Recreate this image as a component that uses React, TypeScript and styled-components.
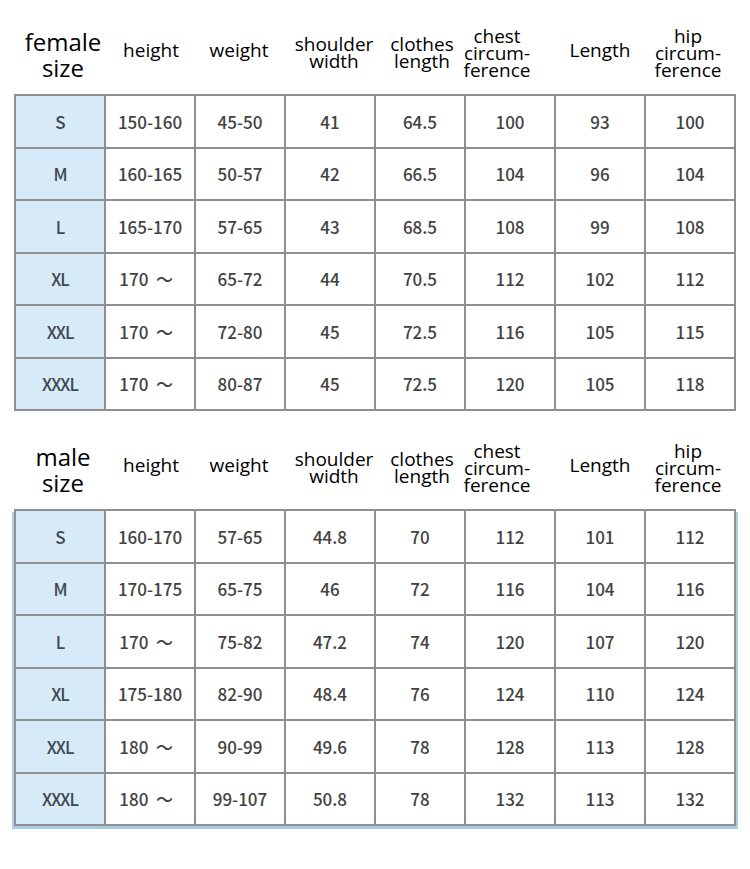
import React from "react";
import styled, { createGlobalStyle } from "styled-components";

const GlobalStyle = createGlobalStyle`
  html, body {
    margin: 0;
    padding: 0;
    background: #ffffff;
  }
`;

const Page = styled.div`
  width: 750px;
  min-height: 869px;
  padding: 16px 0 0 14px;
  box-sizing: border-box;
  display: flex;
  flex-direction: column;
  gap: 20px;
`;

const Section = styled.section`
  display: flex;
  flex-direction: column;
`;

const HeaderRow = styled.div`
  display: grid;
  grid-template-columns: repeat(8, 90px);
  height: 78px;
  align-items: center;
  font-family: "Open Sans", "Noto Sans", sans-serif;
  color: #000;
`;

const Title = styled.div`
  font-size: 24px;
  line-height: 26px;
  text-align: center;
  margin-left: 8px;
`;

const Label = styled.div<{ $nudge: number; $single: boolean }>`
  font-size: 19px;
  line-height: 17px;
  text-align: center;
  margin-left: ${(p) => p.$nudge * 2}px;
  margin-top: ${(p) => (p.$single ? -10 : -4)}px;
  white-space: nowrap;
`;

const Grid = styled.div<{ $edge?: boolean }>`
  display: grid;
  grid-template-columns: repeat(8, 88px);
  grid-auto-rows: 50.5px;
  gap: 2px;
  padding: 2px;
  width: max-content;
  background: #8f8f8f;
  box-shadow: ${(p) => (p.$edge ? "2px 3px 0 #a9cfe6, -2px 3px 0 #a9cfe6" : "none")};
`;

const Cell = styled.div<{ $size?: boolean }>`
  display: flex;
  align-items: center;
  justify-content: center;
  background: ${(p) => (p.$size ? "#d7eaf8" : "#ffffff")};
  color: ${(p) => (p.$size ? "#3e4852" : "#424242")};
  font-family: "Noto Sans CJK SC", "Noto Sans", sans-serif;
  font-size: 17px;
  font-weight: 500;
  letter-spacing: ${(p) => (p.$size ? "-1px" : "0")};
  white-space: pre;
`;

type Row = string[];

const headers: { text: string[]; nudge: number }[] = [
  { text: ["height"], nudge: 2 },
  { text: ["weight"], nudge: 0 },
  { text: ["shoulder", "width"], nudge: 5 },
  { text: ["clothes", "length"], nudge: 3 },
  { text: ["chest", "circum-", "ference"], nudge: -12 },
  { text: ["Length"], nudge: 1 },
  { text: ["hip", "circum-", "ference"], nudge: -1 },
];

const T = "  ～  ";

const female: Row[] = [
  ["S", "150-160", "45-50", "41", "64.5", "100", "93", "100"],
  ["M", "160-165", "50-57", "42", "66.5", "104", "96", "104"],
  ["L", "165-170", "57-65", "43", "68.5", "108", "99", "108"],
  ["XL", "170" + T, "65-72", "44", "70.5", "112", "102", "112"],
  ["XXL", "170" + T, "72-80", "45", "72.5", "116", "105", "115"],
  ["XXXL", "170" + T, "80-87", "45", "72.5", "120", "105", "118"],
];

const male: Row[] = [
  ["S", "160-170", "57-65", "44.8", "70", "112", "101", "112"],
  ["M", "170-175", "65-75", "46", "72", "116", "104", "116"],
  ["L", "170" + T, "75-82", "47.2", "74", "120", "107", "120"],
  ["XL", "175-180", "82-90", "48.4", "76", "124", "110", "124"],
  ["XXL", "180" + T, "90-99", "49.6", "78", "128", "113", "128"],
  ["XXXL", "180" + T, "99-107", "50.8", "78", "132", "113", "132"],
];

function SizeTable({ title, rows, edge }: { title: string; rows: Row[]; edge?: boolean }) {
  return (
    <Section>
      <HeaderRow>
        <Title>
          {title}
          <br />
          size
        </Title>
        {headers.map((h, i) => (
          <Label key={i} $nudge={h.nudge} $single={h.text.length === 1}>
            {h.text.map((t, j) => (
              <div key={j}>{t}</div>
            ))}
          </Label>
        ))}
      </HeaderRow>
      <Grid $edge={edge}>
        {rows.map((r, ri) =>
          r.map((c, ci) => (
            <Cell key={`${ri}-${ci}`} $size={ci === 0}>
              {c}
            </Cell>
          ))
        )}
      </Grid>
    </Section>
  );
}

export default function App() {
  return (
    <>
      <GlobalStyle />
      <Page>
        <SizeTable title="female" rows={female} />
        <SizeTable title="male" rows={male} edge />
      </Page>
    </>
  );
}
